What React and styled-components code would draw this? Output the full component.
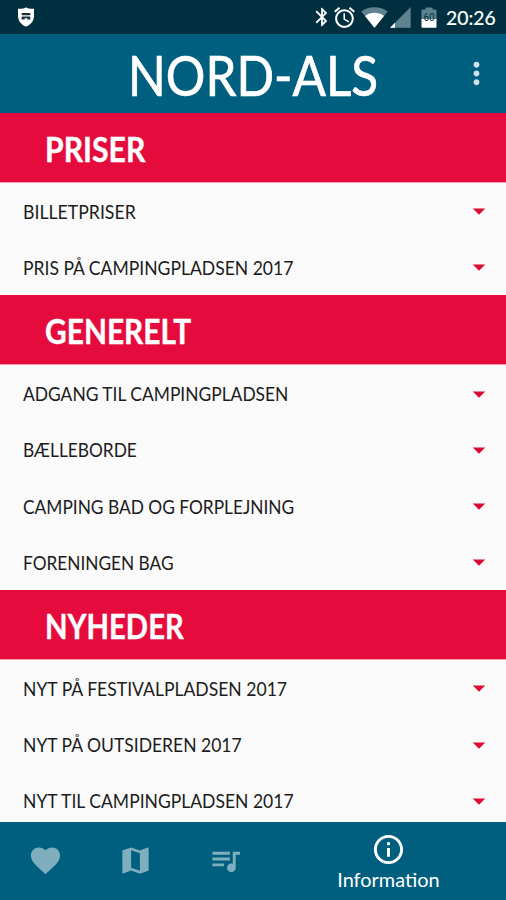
import styled, { createGlobalStyle } from "styled-components";
import {
    MdAlarm,
    MdArrowDropDown,
    MdBluetooth,
    MdFavorite,
    MdInfoOutline,
    MdMap,
    MdMoreVert,
    MdQueueMusic,
} from "react-icons/md";

/* Data ---------------------------*/
const sections = [
    {
        title: "PRISER",
        stretch: 0.862,
        items: [
            { name: "BILLETPRISER", stretch: 0.884 },
            { name: "PRIS PÅ CAMPINGPLADSEN 2017", stretch: 0.877 },
        ],
    },
    {
        title: "GENERELT",
        stretch: 0.854,
        items: [
            { name: "ADGANG TIL CAMPINGPLADSEN", stretch: 0.87 },
            { name: "BÆLLEBORDE", stretch: 0.866 },
            { name: "CAMPING BAD OG FORPLEJNING", stretch: 0.866 },
            { name: "FORENINGEN BAG", stretch: 0.863 },
        ],
    },
    {
        title: "NYHEDER",
        stretch: 0.836,
        items: [
            { name: "NYT PÅ FESTIVALPLADSEN 2017", stretch: 0.878 },
            { name: "NYT PÅ OUTSIDEREN 2017", stretch: 0.876 },
            { name: "NYT TIL CAMPINGPLADSEN 2017", stretch: 0.876 },
        ],
    },
];

/* Status icons ---------------------------*/
const ShieldIcon = () => (
    <svg width="18" height="20" viewBox="0 0 18 20">
        <path
            d="M9 0.3 C10 1.6 14 1.9 17 1.8 V9 C17 14 13.5 18 9 19.6 C4.5 18 1 14 1 9 V1.8 C4 1.9 8 1.6 9 .3Z"
            fill="#fff"
        />
        <path
            d="M4.7 6h8.6v2.2H4.7z M4.7 9.4h8.6v3h-3v-1.2H7.7v1.2h-3z"
            fill="#1b2f3c"
        />
    </svg>
);

const WifiIcon = () => (
    <svg width="27" height="21" viewBox="0 0 27 21">
        <path d="M13.5 20.7 L.3 4.6 C7.5-1.2 19.5-1.2 26.7 4.6Z" fill="#5f8290" />
        <path d="M13.5 20.7 L4 9 C9.5 4.8 17.5 4.8 23 9Z" fill="#fff" />
    </svg>
);

const SignalIcon = () => (
    <svg width="21" height="21" viewBox="0 0 21 21">
        <path d="M0 20.7 L20.7 0 V20.7Z" fill="#5f8290" />
        <path d="M0 20.7 L5 15.7 V20.7Z" fill="#fff" />
    </svg>
);

const BatteryIcon = () => (
    <svg width="16" height="22" viewBox="0 0 16 22">
        <path d="M0.5 3.5 Q.5 2.5 1.5 2.5 H4.5 V.5 H11.5 V2.5 H14.5 Q15.5 2.5 15.5 3.5 V14H.5Z" fill="#5f8290" />
        <path d="M.5 12 H15.5 V20 Q15.5 20.8 14.5 20.8 H1.5 Q.5 20.8 .5 20Z" fill="#fff" />
        <text
            x="8"
            y="14"
            textAnchor="middle"
            fontFamily="Roboto, sans-serif"
            fontSize="10"
            fill="#00303f"
        >
            60
        </text>
    </svg>
);

const App = () => {
    return (
        <>
            <GlobalStyle />
            <Screen>
                <StatusBar>
                    <ShieldIcon />
                    <StatusIcons>
                        <MdBluetooth className="bluetooth" size={22} />
                        <MdAlarm className="alarm" size={25} />
                        <WifiIcon />
                        <SignalIcon />
                        <BatteryIcon />
                        <Clock>
                            <Stretch $x={0.965}>20:26</Stretch>
                        </Clock>
                    </StatusIcons>
                </StatusBar>

                <AppBar>
                    <Title>
                        <Stretch $x={0.868} $origin="center">
                            NORD-ALS
                        </Stretch>
                    </Title>
                    <MenuButton aria-label="Menu">
                        <MdMoreVert size={35} />
                    </MenuButton>
                </AppBar>

                <Content>
                    {sections.map((section) => (
                        <section key={section.title}>
                            <SectionTitle>
                                <Stretch $x={section.stretch}>{section.title}</Stretch>
                            </SectionTitle>
                            {section.items.map((item) => (
                                <Row key={item.name}>
                                    <Stretch $x={item.stretch}>{item.name}</Stretch>
                                    <MdArrowDropDown size={30} />
                                </Row>
                            ))}
                        </section>
                    ))}
                </Content>

                <BottomNav>
                    <Tab>
                        <MdFavorite size={35} />
                    </Tab>
                    <Tab>
                        <MdMap size={35} />
                    </Tab>
                    <Tab>
                        <MdQueueMusic size={35} />
                    </Tab>
                    <Tab $active>
                        <MdInfoOutline size={35} />
                        <Stretch $x={0.995} $origin="center">
                            Information
                        </Stretch>
                    </Tab>
                </BottomNav>
            </Screen>
        </>
    );
};

export default App;

const GlobalStyle = createGlobalStyle`
    * {
        box-sizing: border-box;
    }

    body {
        margin: 0;
        font-family: Lato, sans-serif;
    }
`;

const Screen = styled.div`
    display: flex;
    flex-direction: column;
    width: 506px;
    height: 900px;
    overflow: hidden;
    background-color: #fafafa;
`;

/* Narrows the letters without changing their height */
const Stretch = styled.span`
    display: inline-block;
    white-space: nowrap;
    transform: scaleX(${({ $x }) => $x});
    transform-origin: ${({ $origin }) => $origin || "left"};
`;

const StatusBar = styled.div`
    display: flex;
    flex: none;
    justify-content: space-between;
    height: 34px;
    padding: 7px 10px 0 17px;
    background-color: #003040;
    color: #fff;
`;

const StatusIcons = styled.div`
    display: flex;
    align-items: flex-start;

    .bluetooth {
        margin: -1px -1px 0 0;
    }

    .alarm {
        margin: -2px 4px 0 0;
    }

    svg:nth-child(4) {
        margin: 0 10.5px 0 1.5px;
    }
`;

const Clock = styled.div`
    width: 50px;
    margin-left: 9px;
    font-size: 20px;
    line-height: 21px;
    -webkit-text-stroke: 0.2px #fff;
`;

const AppBar = styled.header`
    display: grid;
    grid-template-columns: 60px 1fr 60px;
    align-items: center;
    flex: none;
    height: 78.7px;
    background-color: #005f7f;
    color: #fff;
`;

const Title = styled.h1`
    grid-column: 2;
    margin: 0;
    padding-left: 1px;
    text-align: center;
    font-size: 57px;
    font-weight: 400;
    line-height: 81px;
    -webkit-text-stroke: 0.7px #fff;
`;

const MenuButton = styled.button`
    display: flex;
    justify-content: center;
    margin-top: -3px;
    padding: 0;
    border: none;
    background: none;
    color: #d3e3e9;
`;

const Content = styled.main`
    flex: 1;
    min-height: 0;
    overflow: hidden;
`;

const SectionTitle = styled.h2`
    height: 69.9px;
    margin: 0;
    padding-left: 44.5px;
    border-bottom: 1px solid #f5a0b3;
    background-color: #e50b3c;
    color: #fff;
    font-size: 35px;
    font-weight: 700;
    line-height: 71px;
    -webkit-text-stroke: 0.4px #fff;
`;

const Row = styled.div`
    display: flex;
    align-items: center;
    justify-content: space-between;
    height: 56.25px;
    padding: 0 12px 0 23px;
    color: #1c1c1c;
    font-size: 20px;

    svg {
        margin-top: 1px;
        color: #dc0b36;
    }
`;

const BottomNav = styled.nav`
    display: grid;
    grid-template-columns: 90px 90px 90px 1fr;
    flex: none;
    height: 77.6px;
    background-color: #005f7f;
`;

const Tab = styled.div`
    display: flex;
    flex-direction: column;
    align-items: center;
    padding-top: ${({ $active }) => ($active ? "10px" : "21px")};
    color: ${({ $active }) => ($active ? "#fff" : "#7fafbf")};
    font-size: 20px;
    line-height: 24px;
`;
